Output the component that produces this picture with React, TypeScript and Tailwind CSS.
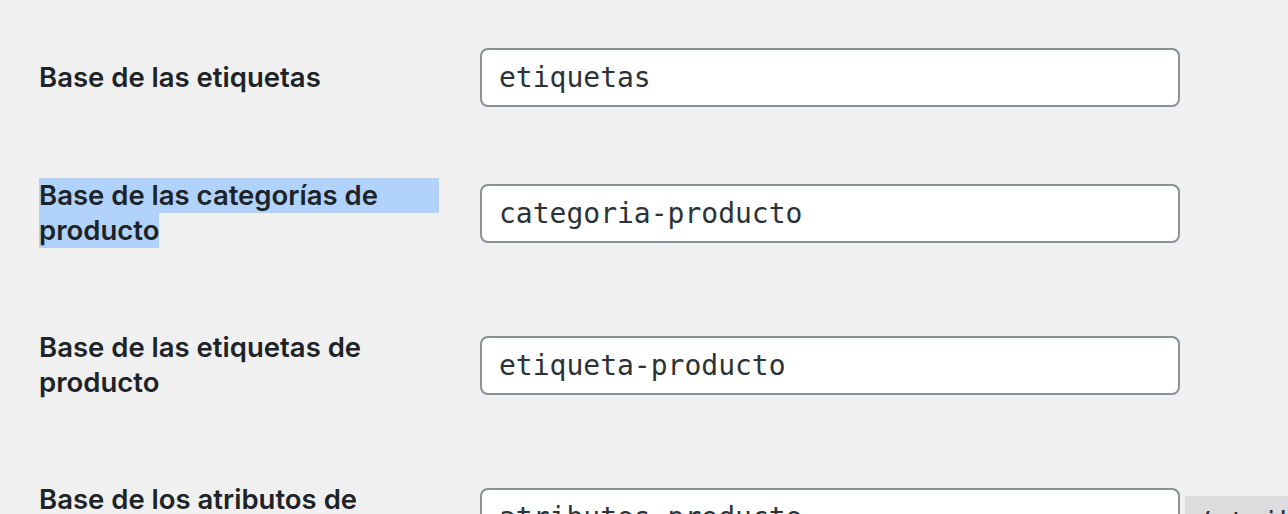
const rows = [
  { label: "Base de las etiquetas", value: "etiquetas" },
  { label: "Base de las categorías de producto", value: "categoria-producto", selected: true },
  { label: "Base de las etiquetas de producto", value: "etiqueta-producto" },
  { label: "Base de los atributos de producto", value: "atributos-producto", code: "/atributo-nombre/" },
];

function Field({ value }: { value: string }) {
  return (
    <input
      type="text"
      readOnly
      defaultValue={value}
      className="w-[700px] h-[59px] shrink-0 rounded-[8px] border-2 border-[#8c8f94] bg-white px-[17px] text-[28px] text-[#2c3338] outline-none [font-family:'DejaVu_Sans_Mono',monospace]"
    />
  );
}

export default function App() {
  return (
    <div className="w-[1288px] h-[514px] overflow-hidden bg-[#f0f0f1] pl-[39px] pt-[48px] [font-family:Inter,'Noto_Sans',sans-serif] text-[#1d2327]">
      {/* first row is centred on its field */}
      <div className="flex items-center">
        <div className="w-[441px] text-[27.5px] font-semibold leading-[35px]">{rows[0].label}</div>
        <Field value={rows[0].value} />
      </div>

      {rows.slice(1).map((row, i) => (
        <div key={row.value} className={`flex items-start ${i === 0 ? "mt-[71px]" : "mt-[82px]"}`}>
          <div className="w-[441px] shrink-0 pr-[41px] text-[27.5px] font-semibold leading-[35px]">
            {row.selected ? (
              <>
                <div className="bg-[#b1d3fb]">Base de las categorías de</div>
                <span className="bg-[#b1d3fb] pb-[1px]">producto</span>
              </>
            ) : (
              row.label
            )}
          </div>
          <div className="mt-[6px] flex items-start gap-[5px]">
            <Field value={row.value} />
            {row.code && (
              <code className="mt-[8px] bg-[#dcdcde] px-[10px] py-[6px] text-[28px] text-[#2c3338] [font-family:'DejaVu_Sans_Mono',monospace]">
                {row.code}
              </code>
            )}
          </div>
        </div>
      ))}
    </div>
  );
}
